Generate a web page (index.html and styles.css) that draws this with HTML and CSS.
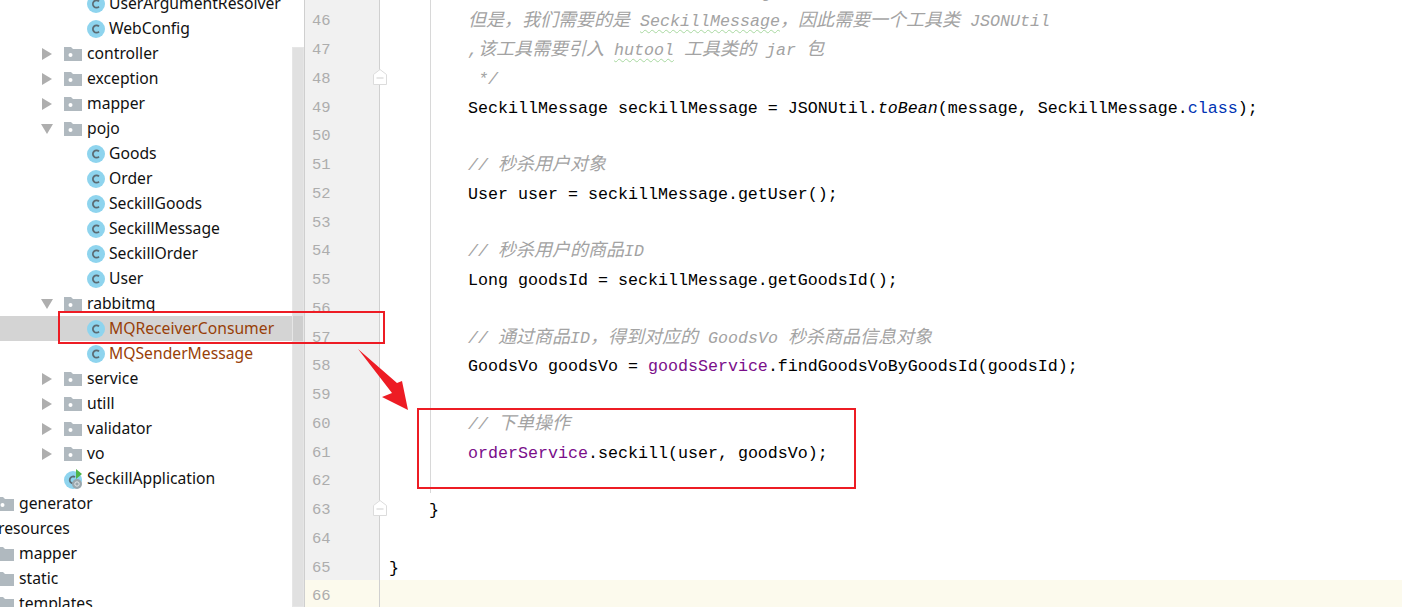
FILE: index.html
```html
<!DOCTYPE html>
<html lang="zh">
<head>
<meta charset="utf-8">
<title>SeckillApplication</title>
<link rel="stylesheet" href="styles.css">
</head>
<body>
<svg class="defs" width="0" height="0">
  <symbol id="cls" viewBox="0 0 18 18"><circle cx="9" cy="9" r="9" fill="#8ed4ee"/><path d="M12 6.4A3.6 3.6 0 1 0 12 11.6" fill="none" stroke="#5c6b73" stroke-width="1.8"/></symbol>
  <symbol id="dir" viewBox="0 0 18 16"><path d="M0 1h7l2 2h9v12H0z" fill="#b0b9bf"/><circle cx="6.500" cy="9" r="2" fill="#fff"/></symbol>
  <symbol id="plain" viewBox="0 0 18 16"><path d="M0 1h7l2 2h9v12H0z" fill="#b0b9bf"/></symbol>
  <symbol id="right" viewBox="0 0 10 12"><path d="M0 0l10 6L0 12z" fill="#aeaeae"/></symbol>
  <symbol id="down" viewBox="0 0 12 10"><path d="M0 0h12L6 10z" fill="#aeaeae"/></symbol>
  <symbol id="fold" viewBox="0 0 14 16"><path d="M.5 5.500L7 .5l6.500 5v10H.5z" fill="#fff" stroke="#dcdcdc"/><path d="M3.500 9h7" stroke="#cfcfcf"/></symbol>
</svg>
<div class="app">
  <aside class="tree">
    <div class="row cls"><svg class="ico"><use href="#cls"/></svg><span>UserArgumentResolver</span></div>
    <div class="row cls"><svg class="ico"><use href="#cls"/></svg><span>WebConfig</span></div>
    <div class="row pkg"><svg class="tw"><use href="#right"/></svg><svg class="fld"><use href="#dir"/></svg><span>controller</span></div>
    <div class="row pkg"><svg class="tw"><use href="#right"/></svg><svg class="fld"><use href="#dir"/></svg><span>exception</span></div>
    <div class="row pkg"><svg class="tw"><use href="#right"/></svg><svg class="fld"><use href="#dir"/></svg><span>mapper</span></div>
    <div class="row pkg"><svg class="tw open"><use href="#down"/></svg><svg class="fld"><use href="#dir"/></svg><span>pojo</span></div>
    <div class="row cls"><svg class="ico"><use href="#cls"/></svg><span>Goods</span></div>
    <div class="row cls"><svg class="ico"><use href="#cls"/></svg><span>Order</span></div>
    <div class="row cls"><svg class="ico"><use href="#cls"/></svg><span>SeckillGoods</span></div>
    <div class="row cls"><svg class="ico"><use href="#cls"/></svg><span>SeckillMessage</span></div>
    <div class="row cls"><svg class="ico"><use href="#cls"/></svg><span>SeckillOrder</span></div>
    <div class="row cls"><svg class="ico"><use href="#cls"/></svg><span>User</span></div>
    <div class="row pkg"><svg class="tw open"><use href="#down"/></svg><svg class="fld"><use href="#dir"/></svg><span>rabbitmq</span></div>
    <div class="row cls selected changed"><svg class="ico"><use href="#cls"/></svg><span>MQReceiverConsumer</span></div>
    <div class="row cls changed"><svg class="ico"><use href="#cls"/></svg><span>MQSenderMessage</span></div>
    <div class="row pkg"><svg class="tw"><use href="#right"/></svg><svg class="fld"><use href="#dir"/></svg><span>service</span></div>
    <div class="row pkg"><svg class="tw"><use href="#right"/></svg><svg class="fld"><use href="#dir"/></svg><span>utill</span></div>
    <div class="row pkg"><svg class="tw"><use href="#right"/></svg><svg class="fld"><use href="#dir"/></svg><span>validator</span></div>
    <div class="row pkg"><svg class="tw"><use href="#right"/></svg><svg class="fld"><use href="#dir"/></svg><span>vo</span></div>
    <div class="row app-row"><svg class="ico" viewBox="0 0 18 20"><circle cx="9" cy="11" r="9" fill="#8ed4ee"/><path d="M11 8A3.500 3.500 0 1 0 9 14.500" fill="none" stroke="#5c6b73" stroke-width="1.800"/><path d="M12 0l6 5-6 5z" fill="#4fb548"/><circle cx="13" cy="15" r="5" fill="#9aa7ad"/><circle cx="13" cy="15" r="2.200" fill="none" stroke="#e4e8ea"/></svg><span>SeckillApplication</span></div>
    <div class="row top"><svg class="fld"><use href="#dir"/></svg><span>generator</span></div>
    <div class="row res"><span>resources</span></div>
    <div class="row top"><svg class="fld"><use href="#plain"/></svg><span>mapper</span></div>
    <div class="row top"><svg class="fld"><use href="#plain"/></svg><span>static</span></div>
    <div class="row top"><svg class="fld"><use href="#plain"/></svg><span>templates</span></div>
  </aside>
  <div class="scrollbar"></div>
  <main class="editor">
    <div class="guide"></div>
    <div class="line"><div class="num">45</div><div class="code cm i2"><span class="cj">从队列中获取到的消息对象是</span> String</div></div>
    <div class="line"><div class="num">46</div><div class="code cm i2"><span class="cj">但是，我们需要的是</span> <span class="typo">SeckillMessage</span><span class="cj">，因此需要一个工具类</span> JSONUtil</div></div>
    <div class="line"><div class="num">47</div><div class="code cm i2">,<span class="cj">该工具需要引入</span> <span class="typo">hutool</span> <span class="cj">工具类的</span> jar <span class="cj">包</span></div></div>
    <div class="line"><div class="num">48<svg class="fold"><use href="#fold"/></svg></div><div class="code cm i3">*/</div></div>
    <div class="line"><div class="num">49</div><div class="code i2">SeckillMessage seckillMessage = JSONUtil.<em>toBean</em>(message, SeckillMessage.<span class="kw">class</span>);</div></div>
    <div class="line"><div class="num">50</div><div class="code"></div></div>
    <div class="line"><div class="num">51</div><div class="code cm i2">// <span class="cj">秒杀用户对象</span></div></div>
    <div class="line"><div class="num">52</div><div class="code i2">User user = seckillMessage.getUser();</div></div>
    <div class="line"><div class="num">53</div><div class="code"></div></div>
    <div class="line"><div class="num">54</div><div class="code cm i2">// <span class="cj">秒杀用户的商品</span>ID</div></div>
    <div class="line"><div class="num">55</div><div class="code i2">Long goodsId = seckillMessage.getGoodsId();</div></div>
    <div class="line"><div class="num">56</div><div class="code"></div></div>
    <div class="line"><div class="num">57</div><div class="code cm i2">// <span class="cj">通过商品</span>ID<span class="cj">，得到对应的</span> GoodsVo <span class="cj">秒杀商品信息对象</span></div></div>
    <div class="line"><div class="num">58</div><div class="code i2">GoodsVo goodsVo = <span class="fd">goodsService</span>.findGoodsVoByGoodsId(goodsId);</div></div>
    <div class="line"><div class="num">59</div><div class="code"></div></div>
    <div class="line"><div class="num">60</div><div class="code cm i2">// <span class="cj">下单操作</span></div></div>
    <div class="line"><div class="num">61</div><div class="code i2"><span class="fd">orderService</span>.seckill(user, goodsVo);</div></div>
    <div class="line"><div class="num">62</div><div class="code"></div></div>
    <div class="line"><div class="num">63<svg class="fold"><use href="#fold"/></svg></div><div class="code i1">}</div></div>
    <div class="line"><div class="num">64</div><div class="code"></div></div>
    <div class="line"><div class="num">65</div><div class="code">}</div></div>
    <div class="line current"><div class="num">66</div><div class="code"></div></div>
  </main>
  <div class="mark mark-tree"></div>
  <div class="mark mark-code"></div>
  <svg class="arrow" viewBox="0 0 52 64" width="52" height="64"><path d="M0 1L39 35 44 33 50 62 24 49 34 45z" fill="#ed1c24"/></svg>
</div>
</body>
</html>
```
FILE: styles.css
```css
html, body {
  margin: 0;
  height: 100%;
  overflow: hidden;
  background: #fff;
}

.defs {
  position: absolute;
}

.app {
  position: relative;
  display: flex;
  width: 1402px;
  height: 607px;
  overflow: hidden;
}

/* project tree */
.tree {
  flex: 0 0 304px;
  height: 607px;
  overflow: hidden;
  font-family: "Noto Sans", "Open Sans", sans-serif;
  font-size: 15.7px;
  color: #111;
}

.row {
  display: flex;
  align-items: center;
  height: 25px;
  white-space: nowrap;
}

.row span {
  margin-top: -2px;
}

.row:first-child {
  margin-top: -9px;
}

.cls {
  padding-left: 87px;
  gap: 4px;
}

.ico {
  flex: 0 0 18px;
  width: 18px;
  height: 18px;
}

.pkg {
  padding-left: 42px;
}

.tw {
  flex: 0 0 10px;
  width: 10px;
  height: 12px;
  margin-right: 12px;
}

.tw.open {
  width: 12px;
  flex-basis: 12px;
  height: 10px;
  margin-left: -1px;
  margin-right: 11px;
}

.fld {
  flex: 0 0 18px;
  width: 18px;
  height: 16px;
  margin-right: 5px;
}

.app-row {
  padding-left: 64px;
  gap: 5px;
}

.app-row .ico {
  height: 20px;
}

.top {
  margin-left: -4px;
}

.res {
  margin-left: -2px;
}

.selected {
  background: #d4d4d4;
}

.changed {
  color: #983f08;
}

.scrollbar {
  position: absolute;
  left: 292px;
  top: 47px;
  bottom: 0;
  width: 10px;
  background: rgba(200, 200, 200, 0.55);
  border: 1px solid #e6e6e6;
}

/* editor */
.editor {
  position: relative;
  flex: 1;
  height: 607px;
  overflow: hidden;
  border-left: 1px solid #cfcfcf;
  font-family: "Liberation Mono", "DejaVu Sans Mono", monospace;
  font-size: 16.67px;
  color: #000;
}

.guide {
  position: absolute;
  left: 125px;
  top: 0;
  height: 493px;
  width: 1px;
  background: #d8d8d8;
}

.line {
  display: flex;
  height: 28.75px;
  line-height: 28.75px;
}

.line:nth-child(2) {
  margin-top: -23.5px;
}

.num {
  position: relative;
  flex: 0 0 75px;
  box-sizing: border-box;
  padding: 2px 0 0 7px;
  background: #f1f1f1;
  border-right: 1px solid #d0d0d0;
  color: #adadad;
  font-size: 15.5px;
}

.current .num,
.current .code {
  background: #fcfaed;
}

.fold {
  position: absolute;
  right: -8px;
  top: 6px;
  width: 14px;
  height: 16px;
}

.code {
  flex: 1;
  position: relative;
  box-sizing: border-box;
  padding: 3px 0 0 9px;
  white-space: pre;
}

.i1 { padding-left: 49px; }
.i2 { padding-left: 88px; }
.i3 { padding-left: 98px; }

.cm {
  color: #a3a3a3;
  font-style: italic;
}

.cj {
  font-family: "Noto Sans CJK SC", sans-serif;
  font-size: 18px;
  line-height: 0;
}

.typo {
  text-decoration: underline wavy #a8d8a0 1px;
  text-underline-offset: 3px;
}

.kw {
  color: #0033b3;
}

.fd {
  color: #7a0e8a;
}

/* annotations */
.mark {
  position: absolute;
  box-sizing: border-box;
  border: 2px solid #ed1c24;
}

.mark-tree {
  left: 58px;
  top: 311px;
  width: 327px;
  height: 33px;
}

.mark-code {
  left: 417px;
  top: 408px;
  width: 439px;
  height: 81px;
}

.arrow {
  position: absolute;
  left: 358px;
  top: 348px;
}
```
